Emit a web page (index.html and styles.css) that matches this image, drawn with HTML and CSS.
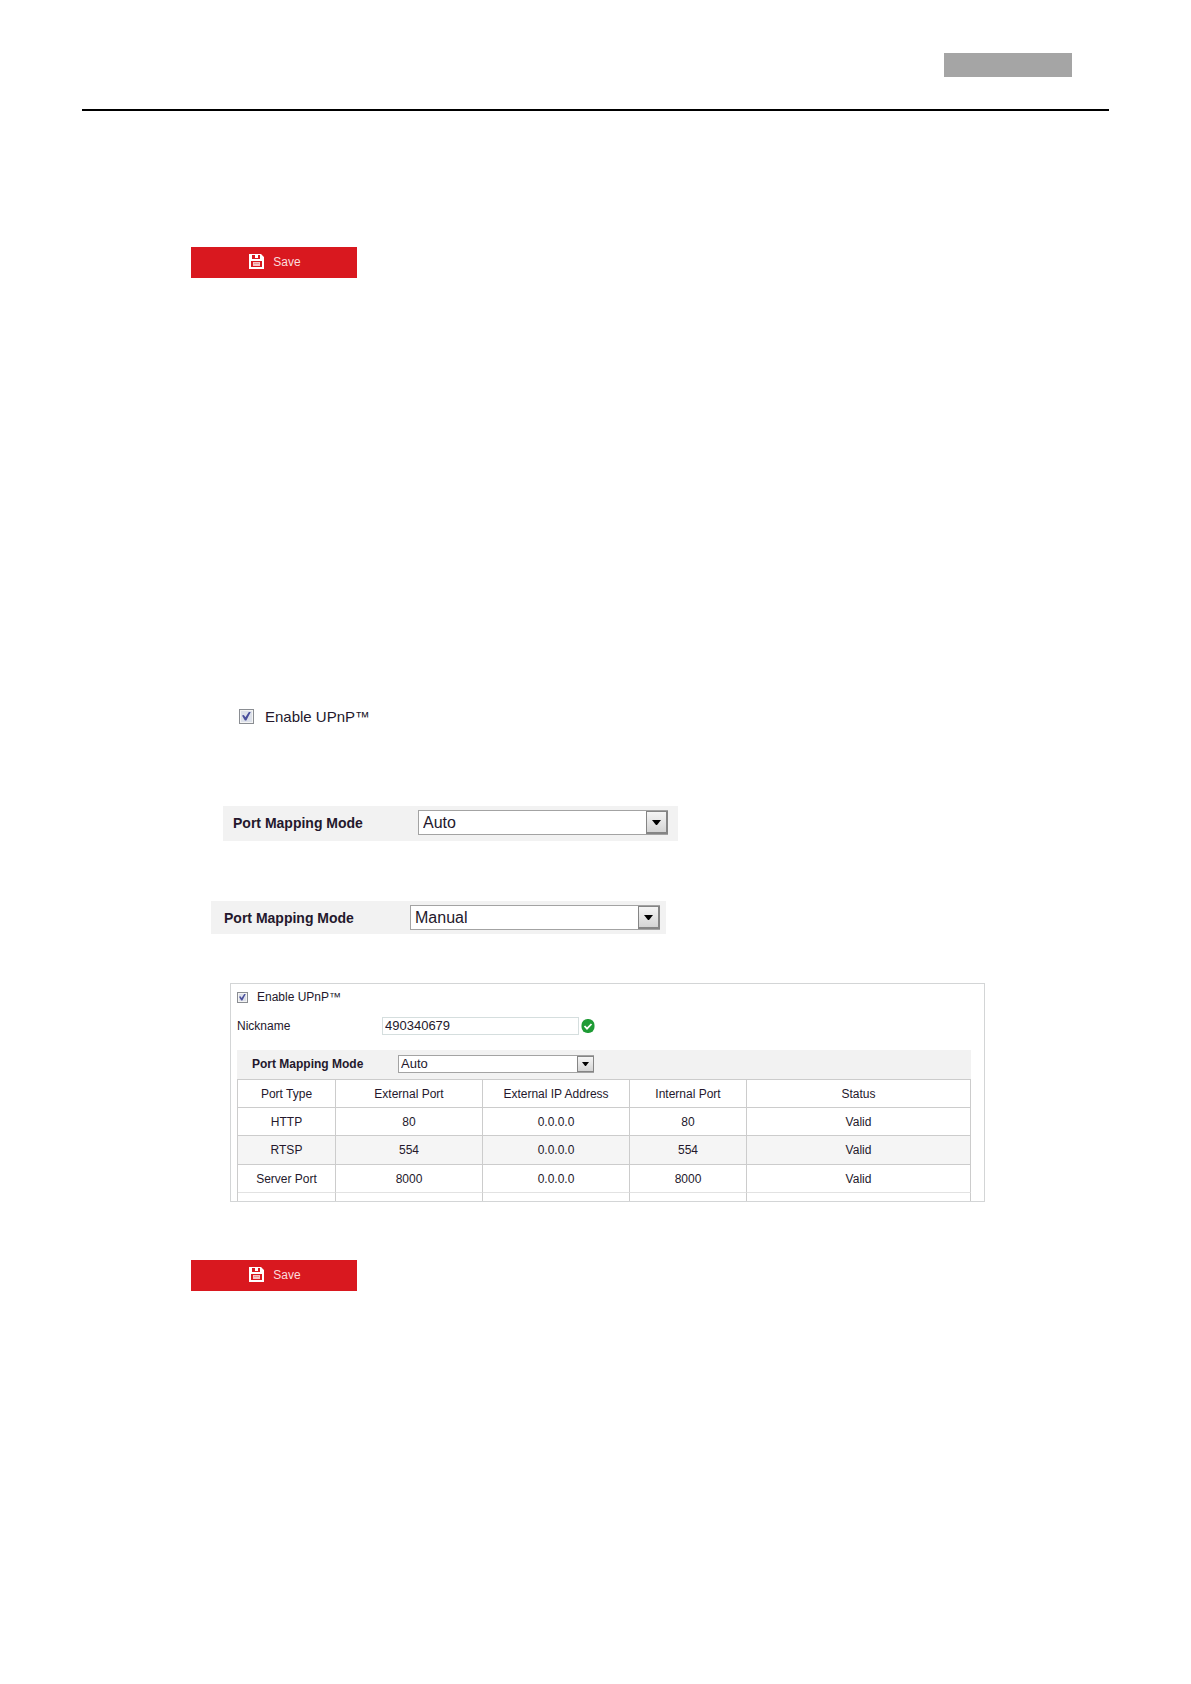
FILE: index.html
```html
<!DOCTYPE html>
<html lang="en">
<head>
<meta charset="utf-8">
<meta name="viewport" content="width=device-width, initial-scale=1">
<title>UPnP Settings</title>
<link rel="stylesheet" href="styles.css">
</head>
<body>
<svg class="defs" aria-hidden="true">
  <symbol id="disk" viewBox="0 0 15 15">
    <path fill="#fff" fill-rule="evenodd" d="M0 0h12l3 3v12H0zM3 1v4h8V1H9v3H6V1zM2 7v6h11V7z"/>
    <path fill="#f6c3c5" d="M4 8h7v4H4z"/>
    <path stroke="#ec9094" d="M5 9.500h5"/>
  </symbol>
  <symbol id="arrow" viewBox="0 0 9 5"><path d="M0 0h9L5 5H4z"/></symbol>
</svg>
<header class="header"><div class="tag"></div></header>
<main class="content">
  <button class="save" type="button"><svg class="disk"><use href="#disk"/></svg>Save</button>

  <label class="check"><input class="box" type="checkbox" checked>Enable UPnP™</label>

  <div class="mode">
    <label class="mode-label" for="mode-auto">Port Mapping Mode</label>
    <div class="select">
      <select id="mode-auto"><option selected>Auto</option><option>Manual</option></select>
      <span class="drop"><svg><use href="#arrow"/></svg></span>
    </div>
  </div>

  <div class="mode mode-manual">
    <label class="mode-label" for="mode-manual">Port Mapping Mode</label>
    <div class="select">
      <select id="mode-manual"><option>Auto</option><option selected>Manual</option></select>
      <span class="drop"><svg><use href="#arrow"/></svg></span>
    </div>
  </div>

  <section class="panel">
    <label class="check check-small"><input class="box" type="checkbox" checked>Enable UPnP™</label>
    <div class="field">
      <label class="field-label" for="nickname">Nickname</label>
      <input class="text" id="nickname" type="text" value="490340679">
      <svg class="valid" viewBox="0 0 14 14" aria-hidden="true"><rect x=".5" width="13" height="14" rx="6" fill="#1e9b35"/><path d="M3.500 7l2.500 2.700L10.500 5" fill="none" stroke="#fff" stroke-width="1.800"/></svg>
    </div>
    <div class="mode mode-small">
      <label class="mode-label" for="mode-table">Port Mapping Mode</label>
      <div class="select">
        <select id="mode-table"><option selected>Auto</option><option>Manual</option></select>
        <span class="drop"><svg><use href="#arrow"/></svg></span>
      </div>
    </div>
    <table class="ports">
      <colgroup><col class="c-type"><col class="c-ext"><col class="c-ip"><col class="c-int"><col></colgroup>
      <thead>
        <tr><th>Port Type</th><th>External Port</th><th>External IP Address</th><th>Internal Port</th><th>Status</th></tr>
      </thead>
      <tbody>
        <tr><td>HTTP</td><td>80</td><td>0.0.0.0</td><td>80</td><td>Valid</td></tr>
        <tr class="alt"><td>RTSP</td><td>554</td><td>0.0.0.0</td><td>554</td><td>Valid</td></tr>
        <tr class="last"><td>Server Port</td><td>8000</td><td>0.0.0.0</td><td>8000</td><td>Valid</td></tr>
        <tr class="stub"><td></td><td></td><td></td><td></td><td></td></tr>
      </tbody>
    </table>
  </section>

  <button class="save" type="button"><svg class="disk"><use href="#disk"/></svg>Save</button>
</main>
</body>
</html>
```
FILE: styles.css
```css
* { box-sizing: border-box; }

body {
  margin: 0;
  min-height: 100vh;
  background: #fff;
  color: #24182c;
  font-family: "Liberation Sans", Arial, sans-serif;
  font-size: 12px;
}

.defs { display: none; }

.header {
  display: flex;
  justify-content: flex-end;
  margin: 0 82px;
  padding: 53px 37px 32px 0;
  border-bottom: 2px solid #000;
}
.tag { width: 128px; height: 24px; background: #a5a5a5; }

.content {
  display: flex;
  flex-direction: column;
  align-items: flex-start;
  padding: 136px 206px 60px 191px;
}

.save {
  display: flex;
  align-items: center;
  justify-content: center;
  gap: 9px;
  width: 166px;
  height: 31px;
  padding: 0 0 2px 2px;
  border: 0;
  background: #d9181f;
  color: #fbdcdd;
  font: 12px "Liberation Sans", Arial, sans-serif;
}
.disk { width: 15px; height: 15px; }

.check {
  display: flex;
  align-items: center;
  gap: 11px;
  height: 22px;
  margin: 427px 0 79px 48px;
  font-size: 15px;
}
.box {
  appearance: none;
  display: grid;
  place-items: center;
  width: 15px;
  height: 15px;
  margin: 0;
  border: 1px solid #8a8d92;
  background: #dde1ea;
  box-shadow: inset 0 0 0 1px #f4f4f4;
}
.box:checked::before {
  content: "";
  width: 9px;
  height: 9px;
  background: #4a4f9c;
  clip-path: polygon(0 45%, 20% 40%, 38% 65%, 80% 0, 100% 0, 48% 100%, 32% 100%);
}

.mode {
  display: flex;
  align-items: center;
  width: 455px;
  height: 35px;
  margin-left: 32px;
  padding: 0 10px 2px;
  background: #f2f2f2;
}
.mode-label { flex: 1; font-size: 14px; font-weight: bold; }
.mode-manual {
  height: 33px;
  margin: 60px 0 49px 20px;
  padding: 0 6px 0 13px;
}

.select { position: relative; width: 250px; height: 25px; }
.select select {
  appearance: none;
  width: 100%;
  height: 100%;
  padding: 0 24px 0 4px;
  border: 1px solid #a3a3a3;
  border-radius: 0;
  background: #fff;
  color: inherit;
  font: 16px "Liberation Sans", Arial, sans-serif;
}
.drop {
  position: absolute;
  top: 1px;
  right: 0;
  bottom: 1px;
  display: grid;
  place-items: center;
  width: 22px;
  border: 1px solid #858585;
  border-right-width: 2px;
  border-bottom-width: 2px;
  background: linear-gradient(#f5f5f5, #d4d4d4);
  pointer-events: none;
}
.drop svg { width: 9px; height: 5px; }

.panel {
  align-self: stretch;
  margin: 0 0 58px 39px;
  padding: 0 13px 0 6px;
  border: 1px solid #d3d5d6;
}
.check-small { gap: 9px; height: 26px; margin: 0 0 7px; font-size: 12px; }
.check-small .box { width: 11px; height: 11px; }
.check-small .box::before { width: 7px; height: 7px; }

.field { display: flex; align-items: center; margin-bottom: 15px; }
.field-label { width: 145px; }
.text {
  width: 197px;
  height: 18px;
  margin-right: 2px;
  padding: 0 2px 1px;
  border: 1px solid #d5dede;
  color: inherit;
  font: 13px "Liberation Sans", Arial, sans-serif;
}
.valid { width: 14px; height: 14px; }

.mode-small {
  width: auto;
  height: 29px;
  margin: 0;
  padding: 0 0 2px 15px;
}
.mode-small .mode-label { flex: 0 0 146px; font-size: 12px; }
.mode-small .select { width: 196px; height: 18px; }
.mode-small select { padding: 0 18px 0 2px; font-size: 13px; }
.mode-small .drop { width: 17px; border-width: 1px; }
.mode-small .drop svg { width: 7px; height: 4px; }

.ports {
  width: 100%;
  table-layout: fixed;
  border-collapse: separate;
  border-spacing: 0;
  border-top: 1px solid #ccc;
  border-left: 1px solid #ccc;
}
.c-type { width: 98px; }
.c-ext, .c-ip { width: 147px; }
.c-int { width: 117px; }
.ports th, .ports td {
  height: 28px;
  padding: 0;
  border-right: 1px solid #ccc;
  border-bottom: 1px solid #ccc;
  font-weight: normal;
  text-align: center;
}
.ports .alt td { height: 29px; background: #f5f5f5; }
.ports .last td { border-bottom-color: #e2e2e2; }
.ports .stub td { height: 8px; border-bottom: 0; }
```
